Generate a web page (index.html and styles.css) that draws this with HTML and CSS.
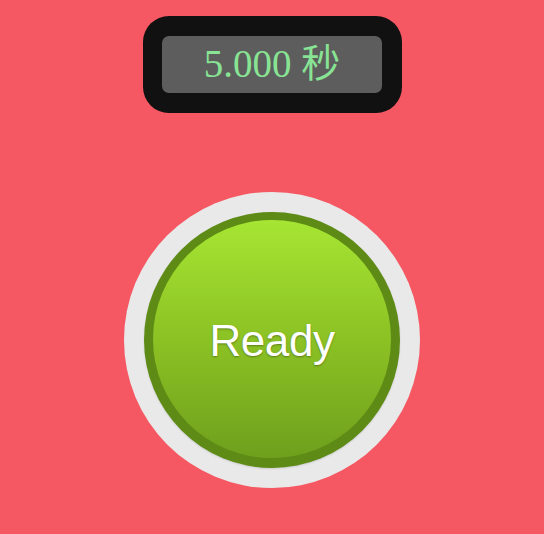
FILE: index.html
```html
<!DOCTYPE html>
<html lang="zh">
<head>
<meta charset="utf-8">
<link rel="stylesheet" href="styles.css">
</head>
<body>
<main class="page">
  <div class="timer">
    <div class="timer-screen"><span class="timer-value">5.000 秒</span></div>
  </div>
  <div class="button-base">
    <div class="button-ring">
      <div class="button-face"><span class="button-label">Ready</span></div>
    </div>
  </div>
</main>
</body>
</html>
```
FILE: styles.css
```css
html, body {
  margin: 0;
  padding: 0;
  background: #f55862;
}
.page {
  width: 544px;
  height: 534px;
  display: flex;
  flex-direction: column;
  align-items: center;
  padding-top: 16px;
  box-sizing: border-box;
}
.timer {
  width: 259px;
  height: 97px;
  box-sizing: border-box;
  padding: 20px 20px 20px 19px;
  background: #111111;
  border-radius: 26px;
  margin-left: 1px;
}
.timer-screen {
  height: 57px;
  background: #5d5d5d;
  border-radius: 7px;
  display: flex;
  align-items: center;
  justify-content: center;
}
.timer-value {
  font-family: "Liberation Serif", "Noto Sans CJK SC", serif;
  font-size: 39px;
  color: #88e494;
  line-height: 1;
  margin-top: -2px;
}
.button-base {
  margin-top: 79px;
  width: 296px;
  height: 296px;
  border-radius: 50%;
  background: #e9e9e9;
  display: flex;
  align-items: center;
  justify-content: center;
}
.button-ring {
  width: 256px;
  height: 256px;
  border-radius: 50%;
  background: #5d8b15;
  box-sizing: border-box;
  padding: 8px 9px 10px 9px;
  box-shadow: 0 1px 2px rgba(0,0,0,0.12);
}
.button-face {
  width: 238px;
  height: 238px;
  border-radius: 50%;
  background: linear-gradient(to bottom, #a6e533 0%, #8cc224 50%, #6ea01d 100%);
  display: flex;
  align-items: center;
  justify-content: center;
}
.button-label {
  font-family: "Liberation Sans", Arial, sans-serif;
  font-size: 44px;
  letter-spacing: -0.4px;
  color: #ffffff;
  text-shadow: 0 1px 2px rgba(0,0,0,0.35);
  margin-top: 3px;
}
```
